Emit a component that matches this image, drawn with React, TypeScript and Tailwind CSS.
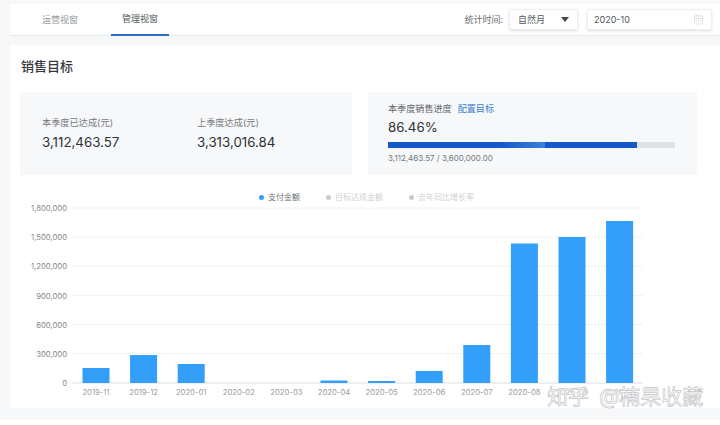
import React from 'react';
import { CalendarDays } from 'lucide-react';

const FONT = 'font-["Inter","Noto_Sans_CJK_SC",sans-serif]';

const gridLines = [
  { y: 208, label: '1,800,000' },
  { y: 237, label: '1,500,000' },
  { y: 266, label: '1,200,000' },
  { y: 295.5, label: '900,000' },
  { y: 324.5, label: '600,000' },
  { y: 353.5, label: '300,000' },
  { y: 383, label: '0' },
];

const bars = [
  { month: '2019-11', top: 368 },
  { month: '2019-12', top: 355 },
  { month: '2020-01', top: 364 },
  { month: '2020-02', top: 383 },
  { month: '2020-03', top: 383 },
  { month: '2020-04', top: 380.5 },
  { month: '2020-05', top: 381 },
  { month: '2020-06', top: 371 },
  { month: '2020-07', top: 345 },
  { month: '2020-08', top: 243.5 },
  { month: '2020-09', top: 237 },
  { month: '2020-10', top: 221 },
];

// svg starts at y=200 on the page, so subtract that from the chart's y values
const OFFSET_Y = 200;

const SalesChart = () => (
  <svg width="710" height="205" className="block">
    {gridLines.map((line, i) => (
      <g key={line.label}>
        <line
          x1="62"
          x2="633"
          y1={line.y - OFFSET_Y}
          y2={line.y - OFFSET_Y}
          stroke={i === 6 ? '#dcdfe3' : '#f1f3f5'}
        />
        <text x="57" y={line.y - OFFSET_Y + 3} textAnchor="end" fontSize="7.7" fill="#85888c">
          {line.label}
        </text>
      </g>
    ))}
    {bars.map((bar, i) => {
      const cx = 86 + i * 47.6;
      return (
        <g key={bar.month}>
          {bar.top < 383 && (
            <rect x={cx - 13.5} y={bar.top - OFFSET_Y} width="27" height={383 - bar.top} fill="#349ffb" />
          )}
          <text x={cx} y={395 - OFFSET_Y} textAnchor="middle" fontSize="7.7" fill="#9a9da1">
            {bar.month}
          </text>
        </g>
      );
    })}
  </svg>
);

const LegendItem = ({ label, active, className }: { label: string; active?: boolean; className: string }) => (
  <div className={`flex items-center gap-[4px] text-[8px] leading-[10px] ${active ? 'text-[#6e7175]' : 'text-[#cfd1d4]'} ${className}`}>
    <span className={`w-[5px] h-[5px] rounded-full ${active ? 'bg-[#349ffb]' : 'bg-[#c9cbce]'}`} />
    {label}
  </div>
);

export default function App() {
  return (
    <div className={`relative w-[720px] h-[425px] overflow-hidden bg-[#f6f8fa] pt-[4px] pl-[10px] ${FONT}`}>
      <div className="h-[32px] bg-white border-b border-[#e8ebee] flex items-center justify-between pr-[8px]">
        <div className="flex h-full pl-[21px] gap-[22px] text-[9px]">
          <div className="w-[58px] flex items-center justify-center text-[#96999d]">运营视窗</div>
          <div className="w-[58px] flex items-center justify-center text-[#55585c] border-b-2 border-[#2f6fc4] -mb-px">管理视窗</div>
        </div>
        <div className="flex items-center text-[9px]">
          <span className="text-[#6b6e72] mr-[6px]">统计时间:</span>
          <div className="w-[69px] h-[21px] bg-white rounded-[2px] border border-[#eceef0] shadow-sm flex items-center justify-between px-[8px] text-[#55585c] mr-[9px]">
            自然月
            <span className="w-0 h-0 border-l-[4px] border-r-[4px] border-t-[5px] border-l-transparent border-r-transparent border-t-[#44474a]" />
          </div>
          <div className="w-[125px] h-[21px] bg-white rounded-[2px] border border-[#eceef0] shadow-sm flex items-center justify-between pl-[6px] pr-[7px] text-[#55585c]">
            2020-10
            <CalendarDays className="w-[11px] h-[11px] text-[#d5d7da]" strokeWidth={1.5} />
          </div>
        </div>
      </div>

      <div className="mt-[9px] h-[363px] bg-white">
        <h2 className="pt-[12px] pl-[11px] text-[13px] leading-[18px] font-medium text-[#35383b]">销售目标</h2>

        <div className="mt-[17px] ml-[10px] flex gap-[16px]">
          <div className="w-[332px] h-[83px] bg-[#f6f8fa] flex pl-[22px] pt-[24px]">
            <div className="w-[155px]">
              <div className="text-[9.2px] leading-[14px] text-[#77797d]">本季度已达成(元)</div>
              <div className="mt-[4px] text-[13.3px] leading-[17px] text-[#2f3235]">3,112,463.57</div>
            </div>
            <div>
              <div className="text-[9.2px] leading-[14px] text-[#77797d]">上季度达成(元)</div>
              <div className="mt-[4px] text-[13.3px] leading-[17px] text-[#2f3235]">3,313,016.84</div>
            </div>
          </div>

          <div className="w-[329px] h-[83px] bg-[#f6f8fa] pl-[20px] pt-[10px]">
            <div className="flex gap-[6px] text-[9.1px] leading-[14px]">
              <span className="text-[#65686c]">本季度销售进度</span>
              <span className="text-[#3f7fd0]">配置目标</span>
            </div>
            <div className="mt-[3px] text-[13.3px] leading-[17px] text-[#2f3235]">86.46%</div>
            <div className="mt-[6px] w-[287px] h-[6px] bg-[#dfe2e5]">
              <div className="w-[249px] h-full bg-[linear-gradient(90deg,#1459c7_45%,#3a80da_63%,#1459c7_63%)]" />
            </div>
            <div className="mt-[4px] text-[8px] leading-[12px] text-[#75787c]">3,112,463.57 / 3,600,000.00</div>
          </div>
        </div>

        <div className="relative mt-[17px] h-[8px]">
          <LegendItem active label="支付金额" className="absolute left-[249px] top-0" />
          <LegendItem label="目标达成金额" className="absolute left-[316px] top-0" />
          <LegendItem label="去年同比增长率" className="absolute left-[399px] top-0" />
        </div>
        <SalesChart />
      </div>

      <div className="mt-[12px] h-[6px] -ml-[10px] bg-white" />

      {/* site watermark over the chart */}
      <div className="absolute left-[547px] top-[383px] flex gap-[10px] text-[21px] leading-[28px] text-white [-webkit-text-stroke:0.5px_#b0b2b4] [text-shadow:0_0_3px_#ffffff,0_0_3px_#ffffff,0_0_2px_#ffffff] whitespace-nowrap">
        <span>知乎</span>
        <span>@楠果收藏</span>
      </div>
    </div>
  );
}
